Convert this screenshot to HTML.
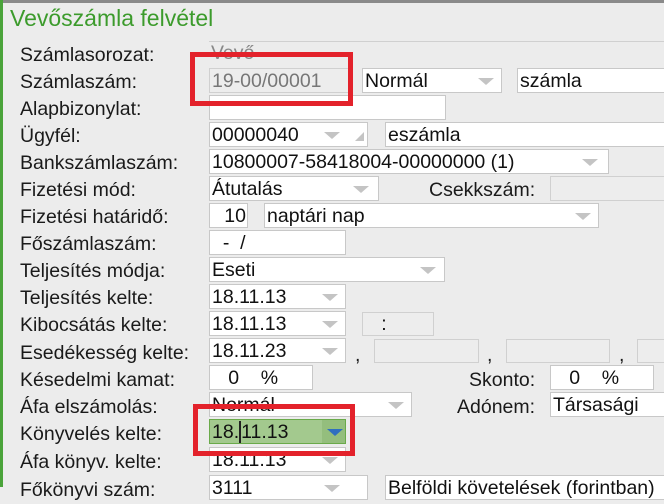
<!DOCTYPE html>
<html><head><meta charset="utf-8"><style>
body{margin:0;width:664px;height:487px;overflow:hidden;background:#ececec;font-family:"Liberation Sans",sans-serif;position:relative}
.a{position:absolute}
.l{position:absolute;left:20px;font-size:19.5px;color:#1a1a1a;line-height:27px}
.t{position:absolute;font-size:19.5px;line-height:27px;color:#1a1a1a}
.b{position:absolute;height:23px;border:1px solid #c8c8c8;background:#fff;font-size:19.5px;line-height:25px;color:#111;box-sizing:content-box;padding-left:2px;white-space:nowrap;overflow:hidden}
.g{background:#ededed;border-color:#d0d0d0}
.ar{position:absolute;width:0;height:0;border-left:8px solid transparent;border-right:8px solid transparent;border-top:7px solid #c4c4c4}
.r{position:absolute;border:5px solid #e3222b}
</style></head><body>
<div class="a" style="left:0;top:0;width:664px;height:3px;background:#8a8a8a"></div>
<div class="a" style="left:0;top:0;width:3px;height:487px;background:#4aa33a"></div>
<div class="a" style="left:10px;top:5px;font-size:23px;color:#3c9b2c">Vevőszámla felvétel</div>

<div class="l" style="top:42px">Számlasorozat:</div>
<div class="t" style="left:211px;top:40px;color:#888">Vevő</div>
<div class="a" style="left:209px;top:41px;width:455px;height:1px;background:#d0d0d0"></div>

<div class="l" style="top:69px">Számlaszám:</div>
<div class="b g" style="left:209px;top:68px;width:136px;color:#777">19-00/00001</div>
<div class="b" style="left:362px;top:68px;width:136px">Normál<span class="ar" style="left:115px;top:9px"></span></div>
<div class="b" style="left:517px;top:68px;width:160px">számla</div>

<div class="l" style="top:96px">Alapbizonylat:</div>
<div class="b" style="left:209px;top:95px;width:233px"></div>

<div class="l" style="top:123px">Ügyfél:</div>
<div class="b" style="left:209px;top:122px;width:155px">00000040<span class="ar" style="left:114px;top:9px"></span><span class="a" style="left:145px;top:9px;width:0;height:0;border-left:9px solid transparent;border-bottom:9px solid #c4c4c4"></span></div>
<div class="b" style="left:385px;top:122px;width:290px">eszámla</div>

<div class="l" style="top:150px">Bankszámlaszám:</div>
<div class="b" style="left:209px;top:149px;width:396px">10800007-58418004-00000000 (1)<span class="ar" style="left:372px;top:9px"></span></div>

<div class="l" style="top:177px">Fizetési mód:</div>
<div class="b" style="left:209px;top:176px;width:166px">Átutalás<span class="ar" style="left:143px;top:9px"></span></div>
<div class="t" style="left:429px;top:177px">Csekkszám:</div>
<div class="b g" style="left:550px;top:176px;width:120px"></div>

<div class="l" style="top:204px">Fizetési határidő:</div>
<div class="b" style="left:209px;top:203px;width:34px;text-align:right;padding-right:1px">10</div>
<div class="b" style="left:264px;top:203px;width:331px">naptári nap<span class="ar" style="left:310px;top:9px"></span></div>

<div class="l" style="top:231px">Főszámlaszám:</div>
<div class="b" style="left:209px;top:230px;width:133px">&nbsp;&nbsp;-&nbsp;&nbsp;/</div>

<div class="l" style="top:258px">Teljesítés módja:</div>
<div class="b" style="left:209px;top:257px;width:232px">Eseti<span class="ar" style="left:210px;top:9px"></span></div>

<div class="l" style="top:285px">Teljesítés kelte:</div>
<div class="b" style="left:209px;top:284px;width:133px">18.11.13<span class="ar" style="left:112px;top:9px"></span></div>

<div class="l" style="top:312px">Kibocsátás kelte:</div>
<div class="b" style="left:209px;top:311px;width:133px">18.11.13<span class="ar" style="left:112px;top:9px"></span></div>
<div class="b g" style="left:362px;top:312px;width:68px;height:22px;line-height:22px">&nbsp;&nbsp;&nbsp;:</div>

<div class="l" style="top:340px">Esedékesség kelte:</div>
<div class="b" style="left:209px;top:338px;width:133px">18.11.23<span class="ar" style="left:112px;top:9px"></span></div>
<div class="t" style="left:355px;top:342px">,</div>
<div class="b g" style="left:374px;top:339px;width:101px;height:22px"></div>
<div class="t" style="left:487px;top:342px">,</div>
<div class="b g" style="left:506px;top:339px;width:100px;height:22px"></div>
<div class="t" style="left:619px;top:342px">,</div>
<div class="b g" style="left:637px;top:339px;width:40px;height:22px"></div>

<div class="l" style="top:367px">Késedelmi kamat:</div>
<div class="b" style="left:209px;top:365px;width:100px">&nbsp;&nbsp;&nbsp;0&nbsp;&nbsp;&nbsp;&nbsp;%</div>
<div class="t" style="left:469px;top:367px">Skonto:</div>
<div class="b" style="left:550px;top:365px;width:100px">&nbsp;&nbsp;&nbsp;0&nbsp;&nbsp;&nbsp;&nbsp;%</div>

<div class="l" style="top:394px">Áfa elszámolás:</div>
<div class="b" style="left:209px;top:392px;width:199px">Normál<span class="ar" style="left:178px;top:9px"></span></div>
<div class="t" style="left:457px;top:394px">Adónem:</div>
<div class="b" style="left:550px;top:392px;width:120px">Társasági</div>

<div class="l" style="top:421px">Könyvelés kelte:</div>
<div class="b" style="left:209px;top:419px;width:133px;background:#a3c98e;border-color:#6aaa4a">18.<span style="border-left:2px solid #222">11.13</span><span class="a" style="left:112px;top:0;width:23px;height:23px;background:#94be7d"></span><span class="ar" style="left:117px;top:9px;border-top-color:#2f6fc0"></span></div>

<div class="l" style="top:449px">Áfa könyv. kelte:</div>
<div class="b" style="left:209px;top:447px;width:133px">18.11.13<span class="ar" style="left:112px;top:9px"></span></div>

<div class="l" style="top:477px">Főkönyvi szám:</div>
<div class="b" style="left:209px;top:475px;width:155px">3111<span class="ar" style="left:114px;top:9px"></span></div>
<div class="b" style="left:385px;top:475px;width:290px">Belföldi követelések (forintban)</div>

<div class="r" style="left:190px;top:52px;width:153px;height:44px"></div>
<div class="r" style="left:193px;top:404px;width:152px;height:42px"></div>
</body></html>
